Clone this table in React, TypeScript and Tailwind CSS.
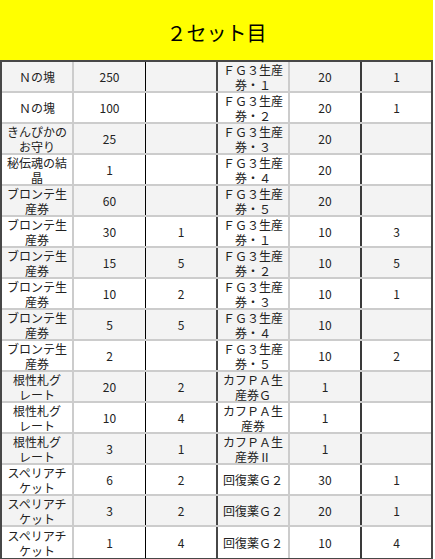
import React from "react";

type Row = { a: React.ReactNode; b: string; c: string; d: React.ReactNode; e: string; f: string };

const two = (x: string, y: string) => (
  <>
    {x}
    <br />
    {y}
  </>
);

const bronte = two("ブロンテ生", "産券");
const konjo = two("根性札グ", "レート");
const superior = two("スペリアチ", "ケット");
const fg = (n: string) => two("ＦＧ３生産", "券・" + n);

const rows: Row[] = [
  { a: "Ｎの塊", b: "250", c: "", d: fg("１"), e: "20", f: "1" },
  { a: "Ｎの塊", b: "100", c: "", d: fg("２"), e: "20", f: "1" },
  { a: two("きんぴかの", "お守り"), b: "25", c: "", d: fg("３"), e: "20", f: "" },
  { a: two("秘伝魂の結", "晶"), b: "1", c: "", d: fg("４"), e: "20", f: "" },
  { a: bronte, b: "60", c: "", d: fg("５"), e: "20", f: "" },
  { a: bronte, b: "30", c: "1", d: fg("１"), e: "10", f: "3" },
  { a: bronte, b: "15", c: "5", d: fg("２"), e: "10", f: "5" },
  { a: bronte, b: "10", c: "2", d: fg("３"), e: "10", f: "1" },
  { a: bronte, b: "5", c: "5", d: fg("４"), e: "10", f: "" },
  { a: bronte, b: "2", c: "", d: fg("５"), e: "10", f: "2" },
  { a: konjo, b: "20", c: "2", d: two("カフＰＡ生", "産券Ｇ"), e: "1", f: "" },
  { a: konjo, b: "10", c: "4", d: two("カフＰＡ生", "産券"), e: "1", f: "" },
  { a: konjo, b: "3", c: "1", d: two("カフＰＡ生", "産券Ⅱ"), e: "1", f: "" },
  { a: superior, b: "6", c: "2", d: "回復薬Ｇ２", e: "30", f: "1" },
  { a: superior, b: "3", c: "2", d: "回復薬Ｇ２", e: "20", f: "1" },
  { a: superior, b: "1", c: "4", d: "回復薬Ｇ２", e: "10", f: "4" },
];

const cell = "flex items-center justify-center text-center h-full overflow-hidden";

export default function App() {
  return (
    <div
      className="w-[433px] text-[12px] leading-[15px] text-[#222]"
      style={{ fontFamily: '"Noto Sans CJK JP", "Noto Sans", sans-serif' }}
    >
      <div className="h-[60px] bg-[#ffff00] flex items-center justify-center pt-[5px] text-[20px] text-black">
        ２セット目
      </div>
      <div className="border-2 border-[#474747]">
        {rows.map((r, i) => (
          <div
            key={i}
            className={
              "flex h-[31px] " +
              (i < rows.length - 1 ? "border-b-2 border-[#cccccc] " : "h-[29px] ") +
              (i % 2 === 0 ? "bg-[#f3f3f3]" : "bg-white")
            }
          >
            <div className={cell + " w-[72px] border-r-2 border-[#cccccc]"}>{r.a}</div>
            <div className={cell + " w-[72px] border-r border-black"}>{r.b}</div>
            <div className={cell + " w-[72px] border-r-2 border-[#474747]"}>{r.c}</div>
            <div className={cell + " w-[72px] border-r-2 border-[#cccccc]"}>{r.d}</div>
            <div className={cell + " w-[72px] border-r-2 border-[#3a3a3a]"}>{r.e}</div>
            <div className={cell + " flex-1"}>{r.f}</div>
          </div>
        ))}
      </div>
    </div>
  );
}
